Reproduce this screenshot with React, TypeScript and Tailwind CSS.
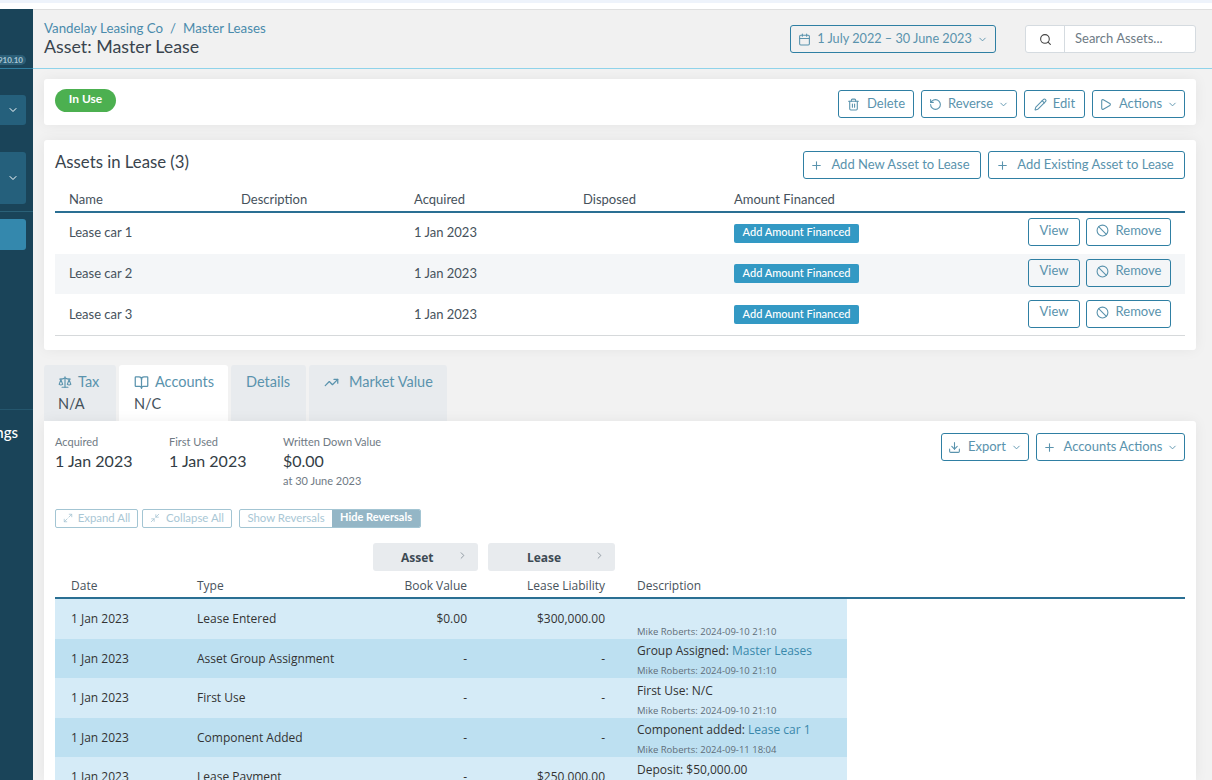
import { Ban, BookOpen, Calendar, ChevronDown, ChevronRight, Download, Maximize2, Minimize2, Pencil, Play, Plus, RotateCcw, Scale, Search, Trash2, TrendingUp } from "lucide-react";
import type { ReactNode } from "react";

function Btn({ icon, children, chevron, className = "" }: { icon?: ReactNode; children: ReactNode; chevron?: boolean; className?: string }) {
  return (
    <button className={"flex h-[28px] items-center justify-center rounded-[3px] border border-[#2f7fa3] text-[13px] text-[#5a93ad] " + className}>
      {icon}
      <span>{children}</span>
      {chevron && <ChevronDown size={11} className="ml-[5px]" />}
    </button>
  );
}

const leaseRows = [
  { name: "Lease car 1", h: "h-[41px] pb-[1px]" },
  { name: "Lease car 2", h: "h-[40px] pb-[1px] bg-[#f4f6f8]" },
  { name: "Lease car 3", h: "h-[41px]" },
];

const ledger = [
  { type: "Lease Entered", book: "$0.00", liab: "$300,000.00", desc: "", link: "", by: "Mike Roberts: 2024-09-10 21:10" },
  { type: "Asset Group Assignment", book: "-", liab: "-", desc: "Group Assigned: ", link: "Master Leases", by: "Mike Roberts: 2024-09-10 21:10" },
  { type: "First Use", book: "-", liab: "-", desc: "First Use: N/C", link: "", by: "Mike Roberts: 2024-09-10 21:10" },
  { type: "Component Added", book: "-", liab: "-", desc: "Component added: ", link: "Lease car 1", by: "Mike Roberts: 2024-09-11 18:04" },
  { type: "Lease Payment", book: "-", liab: "$250,000.00", desc: "Deposit: $50,000.00", link: "", by: "" },
];

function Sidebar() {
  return (
    <div className="flex w-[33px] shrink-0 flex-col items-end overflow-hidden bg-[#1a4459] text-white">
      <div className="mr-[7px] mt-[46px] flex h-[10px] w-[60px] shrink-0 items-center justify-end rounded-full bg-[#2b5f78] pr-[3px] text-[8px] font-bold text-[#a9c6d4]">910.10</div>
      <div className="mt-[3px] h-px w-full shrink-0 bg-[#2f7d9f]" />
      <div className="mr-[7px] mt-[26px] flex h-[30px] w-[60px] shrink-0 items-center justify-end rounded-[3px] bg-[#25607c] pr-[7px]"><ChevronDown size={12} /></div>
      <div className="mr-[7px] mt-[27px] flex h-[52px] w-[60px] shrink-0 items-center justify-end rounded-[3px] bg-[#25607c] pr-[7px]"><ChevronDown size={12} /></div>
      <div className="mt-[7px] h-px w-full shrink-0 bg-[#2b6178]" />
      <div className="mr-[7px] mt-[7px] h-[31px] w-[60px] shrink-0 rounded-[3px] bg-[#3488ad]" />
      <div className="mt-[159px] h-px w-full shrink-0 bg-[#24566d]" />
      <div className="mt-[13px] flex w-[60px] shrink-0 justify-end whitespace-nowrap pr-[15px] text-[15px] font-medium leading-[18px]">Settings</div>
    </div>
  );
}

export default function App() {
  return (
    <div className="flex h-[780px] w-[1212px] flex-col overflow-hidden bg-white font-['Lato','Liberation_Sans',sans-serif] text-[#46525c]">
      <div className="h-[3px] shrink-0 bg-[#eef3fb]" />
      <div className="h-[6px] shrink-0 bg-white" />
      <div className="flex min-h-0 flex-1">
        <Sidebar />
        <div className="flex min-w-0 flex-1 flex-col bg-[#f2f2f2]">
          <header className="flex h-[60px] shrink-0 items-start justify-between border-y border-t-[#dfdfdf] border-b-[#8fd3ea] bg-[#f1f1f1] pl-[11px] pr-[16px]">
            <div className="pt-[9px]">
              <div className="flex items-center gap-[7px] text-[13.3px] leading-[18px] text-[#4a8bac]">
                <span>Vandelay Leasing Co</span><span>/</span><span>Master Leases</span>
              </div>
              <div className="-mt-[1px] text-[17.8px] leading-[20px] text-[#39444d]">Asset: Master Lease</div>
            </div>
            <div className="flex items-center pt-[15px]">
              <button className="mr-[29px] flex h-[28px] w-[206px] items-center justify-center rounded-[3px] border border-[#2f7fa3] text-[12.7px] text-[#5a93ad]">
                <Calendar size={13} className="mr-[6px]" />1 July 2022 – 30 June 2023<ChevronDown size={11} className="ml-[5px]" />
              </button>
              <div className="flex h-[28px] w-[171px] overflow-hidden rounded-[3px] border border-[#d5dbe0] bg-white text-[13px] text-[#6e7b85]">
                <div className="flex w-[39px] items-center justify-center border-r border-[#d5dbe0]"><Search size={13} className="text-[#444]" /></div>
                <div className="flex items-center pl-[10px]">Search Assets...</div>
              </div>
            </div>
          </header>

          <div className="flex min-h-0 flex-1 flex-col pl-[11px] pr-[16px] pt-[10px]">
            <section className="flex h-[46px] shrink-0 items-start justify-between rounded-[3px] bg-white pl-[11px] pr-[11px] pt-[10px] shadow-[0_0_14px_rgba(0,0,0,0.06)]">
              <span className="flex h-[23px] w-[61px] items-center justify-center rounded-full bg-[#4cb050] pb-[3px] text-[12px] font-bold text-white">In Use</span>
              <div className="mt-[1px] flex gap-[7px]">
                <Btn className="w-[76px]" icon={<Trash2 size={13} className="mr-[7px]" />}>Delete</Btn>
                <Btn className="w-[96px]" icon={<RotateCcw size={13} className="mr-[6px]" />} chevron>Reverse</Btn>
                <Btn className="w-[61px]" icon={<Pencil size={13} className="mr-[6px]" />}>Edit</Btn>
                <Btn className="w-[93px]" icon={<Play size={13} className="mr-[7px]" />} chevron>Actions</Btn>
              </div>
            </section>

            <section className="relative mt-[15px] h-[210px] shrink-0 rounded-[3px] bg-white px-[11px] pt-[11px] shadow-[0_0_14px_rgba(0,0,0,0.06)]">
              <div className="flex items-start justify-between">
                <h2 className="mt-[1px] text-[16.75px] leading-[20px] text-[#39444d]">Assets in Lease (3)</h2>
                <div className="flex gap-[7px]">
                  <Btn className="w-[178px] pr-[4px]" icon={<Plus size={13} className="mr-[8px]" />}>Add New Asset to Lease</Btn>
                  <Btn className="w-[197px] pr-[3px]" icon={<Plus size={13} className="mr-[8px]" />}>Add Existing Asset to Lease</Btn>
                </div>
              </div>
              <div className="mt-[12px] grid h-[22px] grid-cols-[172px_173px_169px_151px_1fr] items-start border-b-2 border-[#2a6f93] pl-[14px] text-[13px] leading-[17px]">
                <span>Name</span><span>Description</span><span>Acquired</span><span>Disposed</span><span>Amount Financed</span>
              </div>
              <div className="border-b border-[#d6d9db]">
                {leaseRows.map((row) => (
                  <div key={row.name} className={"grid grid-cols-[172px_173px_169px_151px_1fr] items-center pl-[14px] text-[13px] " + row.h}>
                    <span>{row.name}</span>
                    <span></span>
                    <span>1 Jan 2023</span>
                    <span></span>
                    <div className="flex items-center justify-between pr-[14px]">
                      <span className="flex h-[19px] w-[125px] items-center justify-center rounded-[2px] bg-[#3399c4] pb-[1px] text-[11px] font-medium text-white">Add Amount Financed</span>
                      <div className="mb-[2px] flex gap-[6px]">
                        <button className="h-[28px] w-[52px] rounded-[3px] border border-[#2f7fa3] pb-[3px] text-[13px] text-[#5a93ad]">View</button>
                        <button className="flex h-[28px] w-[85px] items-center justify-center rounded-[3px] border border-[#2f7fa3] pb-[3px] text-[13px] text-[#5a93ad]"><Ban size={13} className="mr-[7px]" />Remove</button>
                      </div>
                    </div>
                  </div>
                ))}
              </div>
            </section>

            <div className="mt-[15px] flex h-[56px] shrink-0 items-start gap-[3px] text-[14.5px]">
              <div className="h-full w-[72px] rounded-t-[3px] bg-[#e8ebee] pl-[14px] pt-[8px] leading-[18px]">
                <div className="flex items-center text-[#5a93ad]"><Scale size={14} className="mr-[6px]" />Tax</div>
                <div className="mt-[4px] text-[#44515b]">N/A</div>
              </div>
              <div className="h-full w-[109px] rounded-t-[3px] bg-white pl-[15px] pt-[8px] leading-[18px]">
                <div className="flex items-center text-[#5a93ad]"><BookOpen size={15} className="mr-[6px]" />Accounts</div>
                <div className="mt-[4px] text-[#44515b]">N/C</div>
              </div>
              <div className="h-full w-[75px] rounded-t-[3px] bg-[#e8ebee] pl-[15px] pt-[8px] leading-[18px] text-[#5a93ad]">Details</div>
              <div className="h-full w-[138px] rounded-t-[3px] bg-[#e8ebee] pl-[15px] pt-[8px] leading-[18px] text-[#5a93ad]">
                <div className="flex items-center"><TrendingUp size={15} className="mr-[10px]" />Market Value</div>
              </div>
            </div>

            <section className="min-h-0 flex-1 rounded-tr-[3px] bg-white px-[11px] pt-[14px] shadow-[0_0_14px_rgba(0,0,0,0.06)]">
              <div className="flex items-start justify-between">
                <div className="flex">
                  <div className="w-[114px]">
                    <div className="text-[11px] leading-[14px] text-[#6f7a84]">Acquired</div>
                    <div className="mt-[2px] text-[16px] leading-[20px] text-[#333d45]">1 Jan 2023</div>
                  </div>
                  <div className="w-[114px]">
                    <div className="text-[11px] leading-[14px] text-[#6f7a84]">First Used</div>
                    <div className="mt-[2px] text-[16px] leading-[20px] text-[#333d45]">1 Jan 2023</div>
                  </div>
                  <div>
                    <div className="text-[11px] leading-[14px] text-[#6f7a84]">Written Down Value</div>
                    <div className="mt-[2px] text-[16px] leading-[20px] text-[#333d45]">$0.00</div>
                    <div className="mt-[3px] text-[11px] leading-[14px] text-[#6f7a84]">at 30 June 2023</div>
                  </div>
                </div>
                <div className="-mt-[2px] flex gap-[7px]">
                  <Btn className="w-[88px]" icon={<Download size={13} className="mr-[7px]" />} chevron>Export</Btn>
                  <Btn className="w-[149px]" icon={<Plus size={13} className="mr-[8px]" />} chevron>Accounts Actions</Btn>
                </div>
              </div>

              <div className="mt-[21px] flex text-[11.4px] text-[#a9c7d5]">
                <button className="flex h-[19px] w-[83px] items-center justify-center rounded-[2px] border border-[#a3c5d3] pb-[2px]"><Maximize2 size={10} className="mr-[5px] mt-[1px]" />Expand All</button>
                <button className="ml-[4px] flex h-[19px] w-[90px] items-center justify-center rounded-[2px] border border-[#a3c5d3] pb-[2px]"><Minimize2 size={10} className="mr-[6px] mt-[1px]" />Collapse All</button>
                <div className="ml-[7px] flex h-[19px] overflow-hidden rounded-[2px] border border-[#a3c5d3]">
                  <span className="flex w-[92px] items-center justify-center pb-[2px]">Show Reversals</span>
                  <span className="flex w-[88px] items-center justify-center bg-[#94b6c6] pb-[2px] text-[11px] font-bold text-white">Hide Reversals</span>
                </div>
              </div>

              <div className="font-['Open_Sans','Noto_Sans',sans-serif] text-[12px] text-[#333]">
                <div className="mt-[15px] flex">
                  <div className="ml-[318px] flex h-[28px] w-[105px] items-center rounded-[3px] bg-[#e8ebee] text-[#3d4a54]">
                    <b className="ml-[28px] mt-[1px] flex-1">Asset</b><ChevronRight size={11} className="mb-[3px] mr-[10px] text-[#8a949c]" />
                  </div>
                  <div className="ml-[10px] flex h-[28px] w-[127px] items-center rounded-[3px] bg-[#e8ebee] text-[#3d4a54]">
                    <b className="ml-[39px] mt-[1px] flex-1">Lease</b><ChevronRight size={11} className="mb-[3px] mr-[10px] text-[#8a949c]" />
                  </div>
                </div>
                <div className="mt-[6px] grid h-[22px] grid-cols-[126px_150px_120px_138px_1fr] items-start border-b-2 border-[#2a6f93] pl-[16px] leading-[17px] text-[#48535c]">
                  <span>Date</span><span>Type</span><span className="text-right">Book Value</span><span className="text-right">Lease Liability</span><span className="pl-[32px]">Description</span>
                </div>
                <div className="w-[792px]">
                  {ledger.map((row, i) => (
                    <div key={row.type} className={"grid grid-cols-[126px_150px_120px_138px_1fr] items-center pl-[16px] " + (i % 2 ? "h-[39px] bg-[#bde0f1]" : "h-[40px] bg-[#d5ebf7]")}>
                      <span>1 Jan 2023</span>
                      <span>{row.type}</span>
                      <span className="text-right">{row.book}</span>
                      <span className="text-right">{row.liab}</span>
                      <div className="flex h-full flex-col justify-end pl-[32px]">
                        <div className="h-[17px] leading-[17px]">
                          {row.desc}
                          {row.link && <span className="font-medium text-[#3a88ab]">{row.link}</span>}
                        </div>
                        <div className="mt-[5px] h-[14px] text-[9.5px] leading-[14px] text-[#5f6d78]">{row.by}</div>
                      </div>
                    </div>
                  ))}
                </div>
              </div>
            </section>
          </div>
        </div>
      </div>
    </div>
  );
}
